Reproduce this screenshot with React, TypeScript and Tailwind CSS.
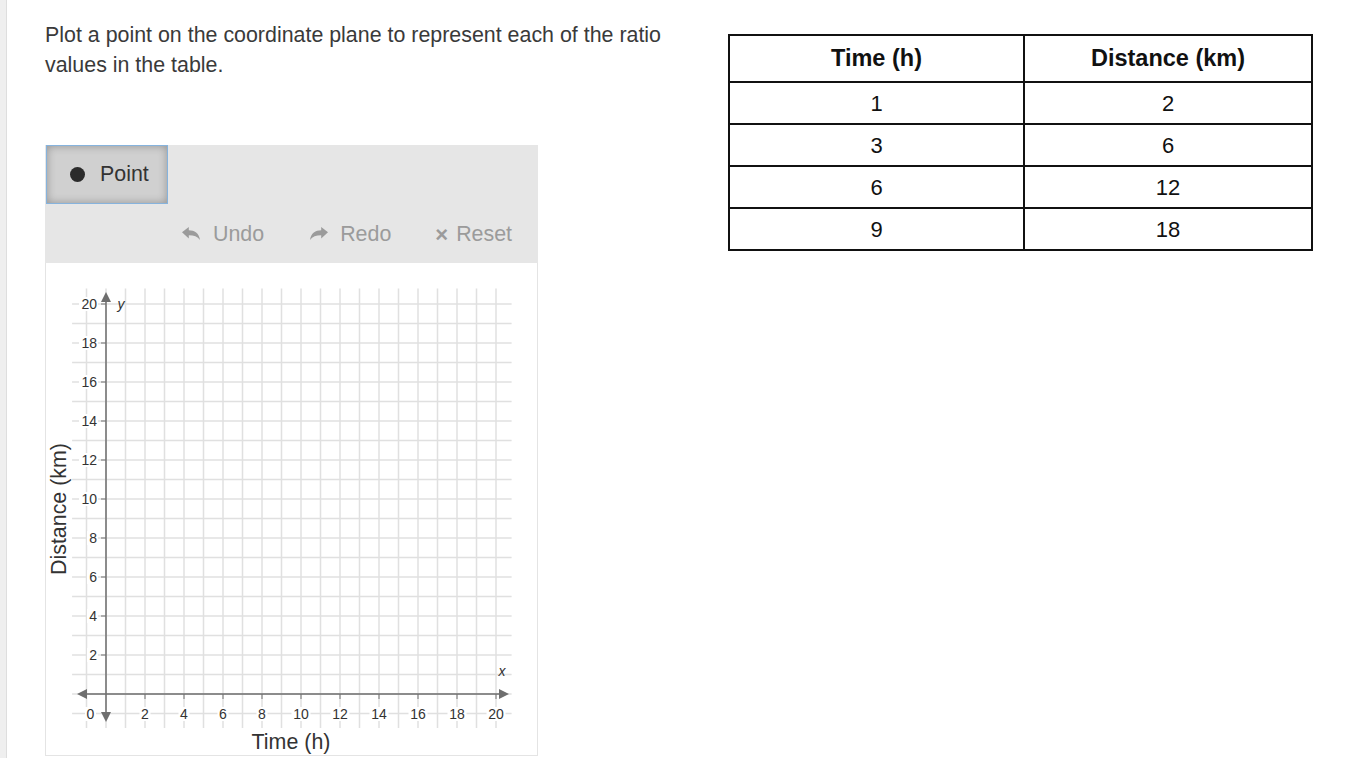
import React from "react";

const S = 19.5;
const OX = 60;
const OY = 431;
const px = (u: number) => OX + u * S;
const py = (u: number) => OY - u * S;

function ReplyIcon({ flip, className }: { flip?: boolean; className?: string }) {
  return (
    <svg viewBox="0 0 18 13" width={18} height={13} className={className} style={flip ? { transform: "scaleX(-1)" } : undefined}>
      <path d="M0 5.2 L6.8 0 V3.3 C12.5 3.3 17 6 18 13 C15.5 9.6 12 8.2 6.8 8.2 V11.6 Z" fill="currentColor" />
    </svg>
  );
}

function Graph() {
  const lines: React.ReactNode[] = [];
  const minU = -1.74;
  const maxU = 20.8;
  for (let i = -1; i <= 20; i++) {
    lines.push(
      <line key={"v" + i} x1={px(i)} x2={px(i)} y1={py(maxU)} y2={py(minU)} stroke="#e0e0e0" strokeWidth={1.5} />
    );
    lines.push(
      <line key={"h" + i} x1={px(minU)} x2={px(maxU)} y1={py(i)} y2={py(i)} stroke="#e0e0e0" strokeWidth={1.5} />
    );
  }
  const evens = [2, 4, 6, 8, 10, 12, 14, 16, 18, 20];
  return (
    <svg width={491} height={492} className="block" style={{ fontFamily: "'Liberation Sans', Arial, sans-serif" }}>
      {lines}
      {evens.map((v) => (
        <line key={"ty" + v} x1={OX - 5} x2={OX} y1={py(v)} y2={py(v)} stroke="#9a9a9a" strokeWidth={1.5} />
      ))}
      {evens.map((v) => (
        <line key={"tx" + v} x1={px(v)} x2={px(v)} y1={OY} y2={OY + 5} stroke="#9a9a9a" strokeWidth={1.5} />
      ))}
      <line x1={36} x2={458} y1={OY} y2={OY} stroke="#6e6e6e" strokeWidth={1.5} />
      <line x1={OX} x2={OX} y1={34} y2={454} stroke="#6e6e6e" strokeWidth={1.5} />
      <polygon points={`31,${OY} 41,${OY - 5} 41,${OY + 5}`} fill="#6e6e6e" />
      <polygon points={`463,${OY} 453,${OY - 5} 453,${OY + 5}`} fill="#6e6e6e" />
      <polygon points={`${OX},29 ${OX - 5},39 ${OX + 5},39`} fill="#6e6e6e" />
      <polygon points={`${OX},459 ${OX - 5},449 ${OX + 5},449`} fill="#6e6e6e" />
      {evens.map((v) => {
        const w = v >= 10 ? 17 : 9;
        return (
          <g key={"ly" + v}>
            <rect x={51 - w - 1} y={py(v) - 7} width={w + 2} height={14} fill="#ffffff" />
            <text x={51} y={py(v) + 5} textAnchor="end" fontSize={14} fill="#333">
              {v}
            </text>
          </g>
        );
      })}
      <rect x={39} y={OY + 13} width={11} height={14} fill="#ffffff" />
      <text x={44.5} y={OY + 25} textAnchor="middle" fontSize={14} fill="#333">
        0
      </text>
      {evens.map((v) => {
        const w = v >= 10 ? 17 : 9;
        return (
          <g key={"lx" + v}>
            <rect x={px(v) - w / 2 - 1} y={OY + 13} width={w + 2} height={14} fill="#ffffff" />
            <text x={px(v)} y={OY + 25} textAnchor="middle" fontSize={14} fill="#333">
              {v}
            </text>
          </g>
        );
      })}
      <text x={456} y={413} textAnchor="middle" fontSize={14} fontStyle="italic" fill="#333">
        x
      </text>
      <text x={75} y={46} textAnchor="middle" fontSize={14} fontStyle="italic" fill="#333">
        y
      </text>
      <text x={245} y={486} textAnchor="middle" fontSize={21.4} fill="#333">
        Time (h)
      </text>
      <text x={0} y={0} transform={`translate(20, 246) rotate(-90)`} textAnchor="middle" fontSize={21.4} fill="#333">
        Distance (km)
      </text>
    </svg>
  );
}

export default function App() {
  const rows = [
    ["1", "2"],
    ["3", "6"],
    ["6", "12"],
    ["9", "18"],
  ];
  return (
    <div
      className="w-[1366px] h-[758px] bg-white flex overflow-hidden text-[#333]"
      style={{ fontFamily: "'Liberation Sans', Arial, sans-serif" }}
    >
      <div className="w-[7px] shrink-0 bg-[#efefef] border-r border-[#dedede]" />
      <div className="flex pl-[38px]">
        <div className="w-[625px] shrink-0">
          <p className="mt-[20px] text-[21.4px] leading-[30px] text-[#3a3a3a]">
            Plot a point on the coordinate plane to represent each of the ratio values in the table.
          </p>
          <div className="mt-[65px] w-[493px]">
            <div className="bg-[#e6e6e6] h-[118px] flex flex-col">
              <div className="h-[59px] flex">
                <div className="ml-[1px] w-[122px] h-[59px] bg-[#d0d0d0] border border-[#86b3dd] shadow-[inset_0_0_8px_rgba(0,0,0,0.3)] flex items-center">
                  <span className="ml-[23px] w-[15px] h-[15px] rounded-full bg-[#2b2b2b]" />
                  <span className="ml-[15px] text-[21.4px] text-[#333]">Point</span>
                </div>
              </div>
              <div className="h-[59px] flex items-center pt-[2px] pl-[137px] text-[#9b9b9b] text-[21.4px]">
                <ReplyIcon className="mb-[2px]" />
                <span className="ml-[13px]">Undo</span>
                <ReplyIcon flip className="ml-[46px] mb-[2px]" />
                <span className="ml-[12px]">Redo</span>
                <span className="ml-[44px] text-[22px] font-bold leading-none">×</span>
                <span className="ml-[8px]">Reset</span>
              </div>
            </div>
            <div className="border-x border-b border-[#e4e4e4] bg-white">
              <Graph />
            </div>
          </div>
        </div>
        <div className="ml-[58px] mt-[34px]">
          <table className="border-collapse border-2 border-[#111] w-[585px] text-[#111]">
            <thead>
              <tr className="h-[47px]">
                <th className="border-2 border-[#111] w-[295px] text-[23.5px] font-bold text-center">Time (h)</th>
                <th className="border-2 border-[#111] text-[23.5px] font-bold text-center">Distance (km)</th>
              </tr>
            </thead>
            <tbody>
              {rows.map((r, i) => (
                <tr key={i} className="h-[42px]">
                  <td className="border-2 border-[#111] text-center text-[22px]">{r[0]}</td>
                  <td className="border-2 border-[#111] text-center text-[22px]">{r[1]}</td>
                </tr>
              ))}
            </tbody>
          </table>
        </div>
      </div>
    </div>
  );
}
